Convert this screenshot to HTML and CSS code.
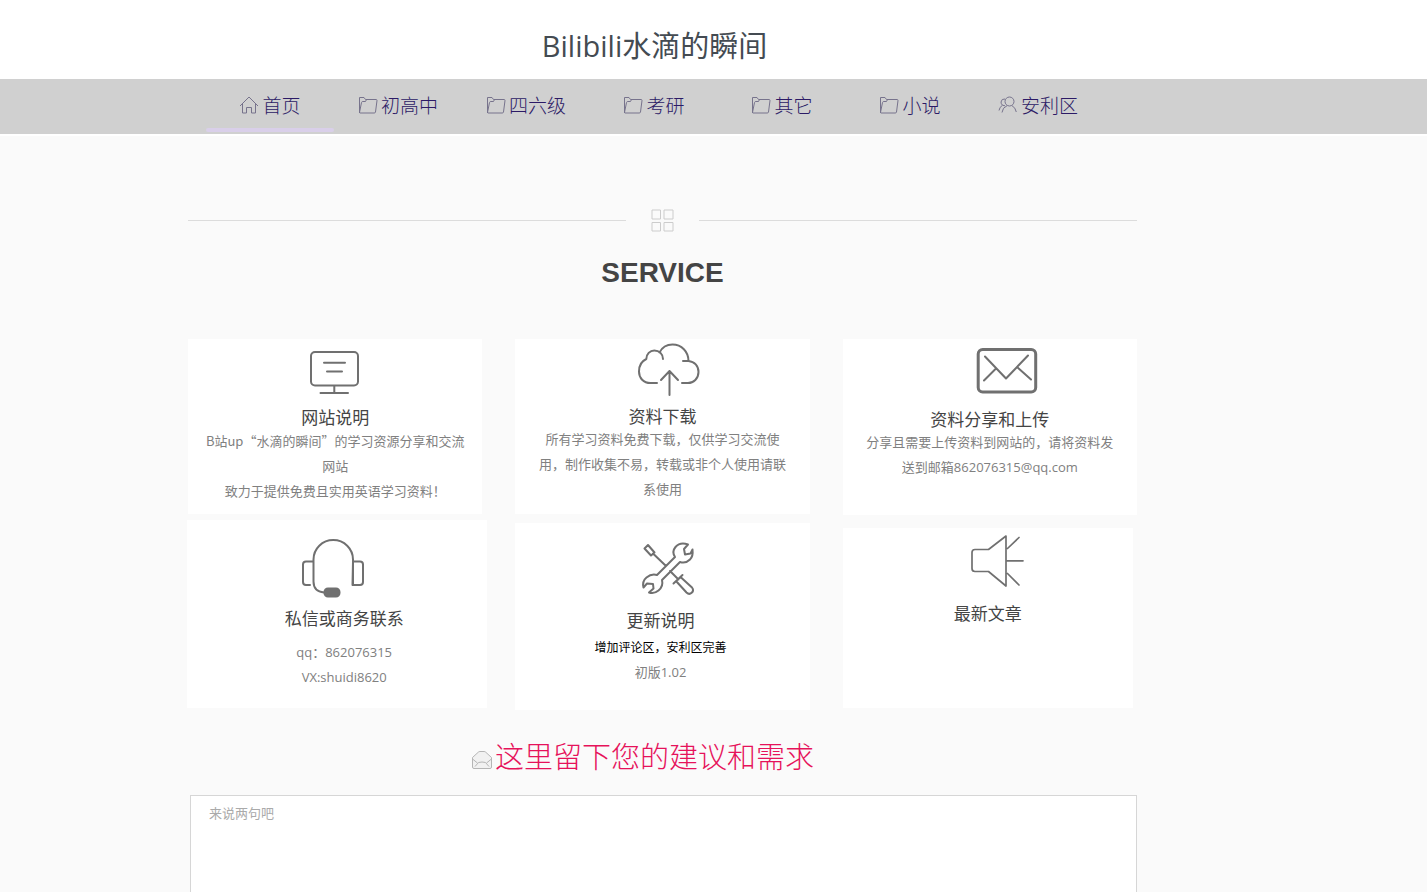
FILE: index.html
```html
<!DOCTYPE html>
<html lang="zh-CN">
<head>
<meta charset="utf-8">
<meta name="viewport" content="width=device-width, initial-scale=1">
<title>Bilibili水滴的瞬间</title>
<link rel="stylesheet" href="styles.css">
</head>
<body>
<svg class="defs" aria-hidden="true">
  <symbol id="folder" viewBox="0 0 20 18">
    <path d="M1 16.500V2q0-1 1-1h4.500l1.500 2h8q1 0 1 1v1.500M1 16.500 4 6.500q.3-1 1.300-1" opacity="0"/>
    <path d="M1.500 17V1.500h4.500l1.500 2h10.500q1 0 1 1l-1.500 11.500q-.2 1-1.200 1H2q-.6 0-.4-1L3.500 6.500q.3-1 1.300-1h2.700l1-2"/>
  </symbol>
</svg>
<header class="header">
  <h1 class="site-title">Bilibili水滴的瞬间</h1>
</header>
<nav class="nav">
  <ul class="nav-list">
    <li><a class="nav-link active" href="#"><svg class="nav-icon" viewBox="0 0 20 18"><path d="M1 10 10 1l9 9M3.500 8v9h4v-5.500h5V17h4V8"/></svg>首页</a></li>
    <li><a class="nav-link" href="#"><svg class="nav-icon"><use href="#folder"/></svg>初高中</a></li>
    <li><a class="nav-link" href="#"><svg class="nav-icon"><use href="#folder"/></svg>四六级</a></li>
    <li><a class="nav-link" href="#"><svg class="nav-icon"><use href="#folder"/></svg>考研</a></li>
    <li><a class="nav-link" href="#"><svg class="nav-icon"><use href="#folder"/></svg>其它</a></li>
    <li><a class="nav-link" href="#"><svg class="nav-icon"><use href="#folder"/></svg>小说</a></li>
    <li><a class="nav-link" href="#"><svg class="nav-icon" viewBox="0 0 20 18"><circle cx="11.500" cy="5.500" r="4.500"/><path d="M4 16.500q.5-5 5-6.800M14 9.700q3.500 1.800 4.300 6.300M7 3Q3.500 2.500 3 6q0 2 1.500 3.200Q1.500 11 1 14.500M4.500 9.200l2.500.6"/></svg>安利区</a></li>
  </ul>
</nav>
<main class="main">
  <div class="divider">
    <svg class="divider-icon" viewBox="0 0 23 23"><path d="M1 1h8.500v9H1zM13 1h9v9h-9zM1 13.500h8.500v8.500H1zM13 13.500h9v8.500h-9z"/></svg>
  </div>
  <h2 class="section-title">SERVICE</h2>

  <div class="columns">
    <div class="column column-left">
      <section class="card card-about">
        <svg class="art" width="70" height="68" viewBox="300 339 70 68"><rect x="311" y="352" width="47" height="33.500" rx="4"/><path d="M324 362.700h21M327 371.500h15M334.300 386v7M320.500 393H348"/></svg>
        <h3 class="card-title">网站说明</h3>
        <p class="card-text">B站up“水滴的瞬间”的学习资源分享和交流网站</p>
        <p class="card-text">致力于提供免费且实用英语学习资料！</p>
      </section>
      <section class="card card-contact">
        <svg class="art" width="100" height="88" viewBox="287 520 100 88"><path d="M310 585h-4q-3 0-3-3v-17.500q0-3 3-3h7.500M353 561.500h7q3 0 3 3V582q0 3-3 3h-7.500zM324 592.500q-10.500-1-10.500-11v-22a19.750 19.500 0 0 1 39.500 0V585"/><rect class="solid" x="324.500" y="588.500" width="15" height="8" rx="3.500"/></svg>
        <h3 class="card-title">私信或商务联系</h3>
        <p class="card-text">qq：862076315</p>
        <p class="card-text">VX:shuidi8620</p>
      </section>
    </div>
    <div class="column column-middle">
      <section class="card card-download">
        <svg class="art" width="90" height="67" viewBox="617 339 90 67"><path d="M657 383h-6.500c-7 0-11.500-5-11.500-11.500s3-10.500 7.300-12.500c0-5 3.700-8.500 8-8.500 5 0 8.700 3.500 8.700 8.500M659.500 352.500c2.500-5 7.500-8 13-8 9 0 16 7 16 16.500M683 361h5.500c6 .500 10 5 10 11 0 6.500-5 11-10.500 11h-6M669.500 395v-24M661 380l8.500-9 8.500 9"/></svg>
        <h3 class="card-title">资料下载</h3>
        <p class="card-text">所有学习资料免费下载，仅供学习交流使用，制作收集不易，转载或非个人使用请联系使用</p>
      </section>
      <section class="card card-updates">
        <svg class="art" width="96" height="87" viewBox="613 523 96 87"><path d="M645.500 548.500l3.500-3.500 6.500 7.500-3.500 3zM654 553.500l13 12.500M671 571l8.500 8.500M674.500 583.500l9-8.500M677 581l10.500 11.500c3.500 3.500 8.500-1 5.500-5L681.500 577M658 575l18-18c-2-3-2-7 .500-10 3-3.500 8-4 12.500-2.500l-4 4.500 1 5.500 5.500-1 2-4c.500 4 .500 7-2.500 10s-7 3.500-10 2.500l-18 18c1 4-.500 8-3.500 10.500s-6.500 3-9.500 2l4.500-4-.500-4.500-6-.500-3.500 4c-1-4 0-7.500 3-10s7-3.500 10.500-2.500z"/></svg>
        <h3 class="card-title">更新说明</h3>
        <p class="card-text card-note">增加评论区，安利区完善</p>
        <p class="card-text">初版1.02</p>
      </section>
    </div>
    <div class="column column-right">
      <section class="card card-upload">
        <svg class="art" width="120" height="70" viewBox="930 339 120 70"><rect class="thick" x="978.200" y="349.500" width="57.500" height="42.500" rx="4.500"/><path d="M985 356.500l21 22 22-23M984 380.500l12-12M1017 367l14 12.500"/></svg>
        <h3 class="card-title">资料分享和上传</h3>
        <p class="card-text">分享且需要上传资料到网站的，请将资料发送到邮箱862076315@qq.com</p>
      </section>
      <section class="card card-latest">
        <svg class="art" width="100" height="75" viewBox="938 528 100 75"><path class="thin" d="M1006 536l-17.500 13.500h-13.500q-3 0-3 3v16q0 3 3 3h13.500L1006 586zM1007.500 548.500l11.500-11M1007 560.800h16M1007.500 573.500l11.500 11.500"/></svg>
        <h3 class="card-title">最新文章</h3>
      </section>
    </div>
  </div>

  <form class="feedback">
    <label class="feedback-title" for="message"><svg class="feedback-icon" viewBox="0 0 22 20"><path class="fill" d="M1.500 7.500 7.500 2q.500-.500 1.500-.500h4q1 0 1.500.500l6 5.500V17q0 1.500-1.500 1.500H3Q1.500 18.500 1.500 17z"/><path d="M1.500 9l5 4M20.500 9l-5 4M4 16.500l3.500-4q3.500-1 7 0l3.500 4"/></svg>这里留下您的建议和需求</label>
    <textarea class="message" id="message" placeholder="来说两句吧"></textarea>
  </form>
</main>
</body>
</html>
```
FILE: styles.css
```css
* {
  box-sizing: border-box;
}

body {
  margin: 0;
  background: #fafafa;
  color: #444;
  font-family: "Open Sans", "Noto Sans CJK SC", sans-serif;
  font-size: 13px;
}

h1, h2, h3, p, ul {
  margin: 0;
  padding: 0;
}

svg {
  fill: none;
  stroke: #707070;
}

.defs {
  display: none;
}

.header {
  padding: 24px 306px 11px 188px;
  background: #fff;
  text-align: center;
}

.site-title {
  color: #444b52;
  font-size: 29px;
  font-weight: 400;
  line-height: 44px;
}

.nav {
  padding-left: 206px;
  background: #d0d0d0;
  border-bottom: 2px solid #fff;
}

.nav-list {
  display: flex;
  list-style: none;
}

.nav-link {
  display: flex;
  width: 128px;
  height: 55px;
  padding-bottom: 3px;
  align-items: center;
  justify-content: center;
  gap: 3px;
  color: #2c1a66;
  font-size: 19px;
  font-weight: 300;
  text-decoration: none;
  position: relative;
}

.active::after {
  position: absolute;
  right: 0;
  bottom: 2px;
  left: 0;
  height: 4px;
  border-radius: 2px;
  background: #d9cfe9;
  content: "";
}

.nav-icon {
  width: 20px;
  height: 18px;
  stroke: #77738c;
}

.main {
  padding: 73px 290px 0 188px;
}

.divider {
  display: flex;
  align-items: center;
  gap: 25px;
}

.divider::before,
.divider::after {
  height: 1px;
  flex: 1;
  background: #dcdcdc;
  content: "";
}

.divider-icon {
  width: 23px;
  height: 23px;
  stroke: #ccc;
}

.section-title {
  padding: 22px 0 47px;
  color: #444;
  font-family: "Liberation Sans", Arial, sans-serif;
  font-size: 28px;
  line-height: 38px;
  text-align: center;
}

.columns {
  display: flex;
  gap: 33px;
}

.column {
  display: flex;
  flex: 1;
  flex-direction: column;
}

.column-left {
  gap: 6px;
}

.column-middle {
  gap: 9px;
}

.column-right {
  gap: 13px;
}

.card {
  min-height: 175px;
  padding: 0 20px;
  background: #fff;
  text-align: center;
}

.card-about {
  padding: 0 16px;
}

.card-about .card-text {
  font-family: "Noto Sans CJK SC", sans-serif;
}

.card-contact {
  min-height: 188px;
  margin: 0 -5px 0 -1px;
}

.card-contact .card-title {
  padding: 0 0 11px 14px;
}

.card-contact .card-text {
  padding-left: 14px;
}

.card-updates {
  min-height: 187px;
  padding-right: 24px;
}

.card-updates .card-title {
  padding-bottom: 4px;
}

.card-upload {
  min-height: 176px;
}

.card-latest {
  min-height: 180px;
  margin-right: 4px;
}

.art {
  display: block;
  margin: 0 auto;
  stroke-linecap: round;
  stroke-linejoin: round;
  stroke-width: 2;
}

.solid {
  fill: #707070;
}

.thick {
  stroke-width: 3;
}

.thin {
  stroke-width: 1.7;
}

.card-title {
  color: #444;
  font-size: 17px;
  font-weight: 400;
  line-height: 21px;
}

.card-text {
  color: #808080;
  line-height: 25px;
}

.card-note {
  color: #000;
  font-size: 12px;
}

.feedback {
  padding: 23px 0 0 2px;
}

.feedback-title {
  display: flex;
  margin-right: 42px;
  align-items: center;
  justify-content: center;
  gap: 2px;
  color: #e6125a;
  font-family: "Noto Sans CJK SC", sans-serif;
  font-size: 29px;
  font-weight: 300;
  line-height: 44px;
}

.feedback-icon {
  width: 22px;
  height: 20px;
  margin-top: 9px;
  stroke: #b5b5b5;
}

.fill {
  fill: #f1f1f1;
}

.message {
  display: block;
  width: 100%;
  height: 160px;
  margin-top: 18px;
  padding: 5px 18px;
  border: 1px solid #d6d6d6;
  background: #fff;
  color: #444;
  font: inherit;
  line-height: 25px;
  resize: none;
}

.message::placeholder {
  color: #aaa;
}
```
